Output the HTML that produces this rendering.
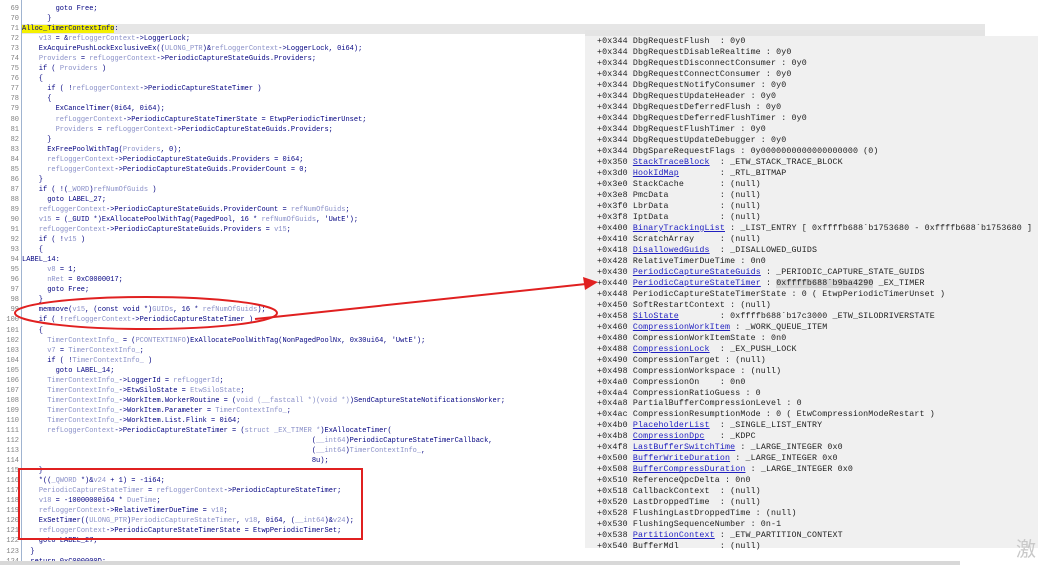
<!DOCTYPE html>
<html><head><meta charset="utf-8"><style>
body{margin:0;width:1038px;height:565px;overflow:hidden;background:#fff;position:relative;font-family:"Liberation Mono",monospace}
#ln{position:absolute;left:0;top:4px;width:19px;text-align:right;font-size:7px;line-height:10.04px;color:#808080;white-space:pre;margin:0}
#sep{position:absolute;left:21px;top:0;width:1px;height:565px;background:#a0b4d0}
#code{position:absolute;left:22px;top:4px;font-size:7px;line-height:10.04px;color:#000080;white-space:pre;margin:0}
.v{color:#8a90c8}
.hl{position:absolute;left:22px;top:24px;width:963px;height:10px;background:#e6e6e6}
.y{background:#f4f000}
#rp{position:absolute;left:585px;top:36px;width:453px;height:512px;background:#f0f0f0}
#rbar{position:absolute;left:585px;top:30px;width:400px;height:6px;background:#e4e4e4}
#rt{position:absolute;left:597px;top:37px;font-size:8.3px;letter-spacing:0.14px;line-height:10.98px;color:#202020;white-space:pre;margin:0}
#rt u{color:#2020c0}
.bot{position:absolute;left:0;top:561px;width:960px;height:4px;background:#d8d8d8}
</style></head><body>
<div class="hl"></div>
<pre id="ln">69
70
71
72
73
74
75
76
77
78
79
80
81
82
83
84
85
86
87
88
89
90
91
92
93
94
95
96
97
98
99
100
101
102
103
104
105
106
107
108
109
110
111
112
113
114
115
116
117
118
119
120
121
122
123
124</pre>
<div id="sep"></div>
<pre id="code">        goto Free;
      }
<span class="y">Alloc_TimerContextInfo</span>:
    <span class="v">v13</span> = &amp;<span class="v">refLoggerContext</span>-&gt;LoggerLock;
    ExAcquirePushLockExclusiveEx((<span class="v">ULONG_PTR</span>)&amp;<span class="v">refLoggerContext</span>-&gt;LoggerLock, 0i64);
    <span class="v">Providers</span> = <span class="v">refLoggerContext</span>-&gt;PeriodicCaptureStateGuids.Providers;
    if ( <span class="v">Providers</span> )
    {
      if ( !<span class="v">refLoggerContext</span>-&gt;PeriodicCaptureStateTimer )
      {
        ExCancelTimer(0i64, 0i64);
        <span class="v">refLoggerContext</span>-&gt;PeriodicCaptureStateTimerState = EtwpPeriodicTimerUnset;
        <span class="v">Providers</span> = <span class="v">refLoggerContext</span>-&gt;PeriodicCaptureStateGuids.Providers;
      }
      ExFreePoolWithTag(<span class="v">Providers</span>, 0);
      <span class="v">refLoggerContext</span>-&gt;PeriodicCaptureStateGuids.Providers = 0i64;
      <span class="v">refLoggerContext</span>-&gt;PeriodicCaptureStateGuids.ProviderCount = 0;
    }
    if ( !(<span class="v">_WORD</span>)<span class="v">refNumOfGuids</span> )
      goto LABEL_27;
    <span class="v">refLoggerContext</span>-&gt;PeriodicCaptureStateGuids.ProviderCount = <span class="v">refNumOfGuids</span>;
    <span class="v">v15</span> = (_GUID *)ExAllocatePoolWithTag(PagedPool, 16 * <span class="v">refNumOfGuids</span>, 'UwtE');
    <span class="v">refLoggerContext</span>-&gt;PeriodicCaptureStateGuids.Providers = <span class="v">v15</span>;
    if ( !<span class="v">v15</span> )
    {
LABEL_14:
      <span class="v">v8</span> = 1;
      <span class="v">nRet</span> = 0xC0000017;
      goto Free;
    }
    memmove(<span class="v">v15</span>, (const void *)<span class="v">GUIDs</span>, 16 * <span class="v">refNumOfGuids</span>);
    if ( !<span class="v">refLoggerContext</span>-&gt;PeriodicCaptureStateTimer )
    {
      <span class="v">TimerContextInfo_</span> = (<span class="v">PCONTEXTINFO</span>)ExAllocatePoolWithTag(NonPagedPoolNx, 0x30ui64, 'UwtE');
      <span class="v">v7</span> = <span class="v">TimerContextInfo_</span>;
      if ( !<span class="v">TimerContextInfo_</span> )
        goto LABEL_14;
      <span class="v">TimerContextInfo_</span>-&gt;LoggerId = <span class="v">refLoggerId</span>;
      <span class="v">TimerContextInfo_</span>-&gt;EtwSiloState = <span class="v">EtwSiloState</span>;
      <span class="v">TimerContextInfo_</span>-&gt;WorkItem.WorkerRoutine = (<span class="v">void (__fastcall *)(void *)</span>)SendCaptureStateNotificationsWorker;
      <span class="v">TimerContextInfo_</span>-&gt;WorkItem.Parameter = <span class="v">TimerContextInfo_</span>;
      <span class="v">TimerContextInfo_</span>-&gt;WorkItem.List.Flink = 0i64;
      <span class="v">refLoggerContext</span>-&gt;PeriodicCaptureStateTimer = (<span class="v">struct _EX_TIMER *</span>)ExAllocateTimer(
                                                                     (<span class="v">__int64</span>)PeriodicCaptureStateTimerCallback,
                                                                     (<span class="v">__int64</span>)<span class="v">TimerContextInfo_</span>,
                                                                     8u);
    }
    *((<span class="v">_QWORD</span> *)&amp;<span class="v">v24</span> + 1) = -1i64;
    <span class="v">PeriodicCaptureStateTimer</span> = <span class="v">refLoggerContext</span>-&gt;PeriodicCaptureStateTimer;
    <span class="v">v18</span> = -10000000i64 * <span class="v">DueTime</span>;
    <span class="v">refLoggerContext</span>-&gt;RelativeTimerDueTime = <span class="v">v18</span>;
    ExSetTimer((<span class="v">ULONG_PTR</span>)<span class="v">PeriodicCaptureStateTimer</span>, <span class="v">v18</span>, 0i64, (<span class="v">__int64</span>)&amp;<span class="v">v24</span>);
    <span class="v">refLoggerContext</span>-&gt;PeriodicCaptureStateTimerState = EtwpPeriodicTimerSet;
    goto LABEL_27;
  }
  return 0xC000000D;</pre>
<div class="bot"></div>
<div id="rbar"></div>
<div id="rp"></div>
<pre id="rt">+0x344 DbgRequestFlush  : 0y0
+0x344 DbgRequestDisableRealtime : 0y0
+0x344 DbgRequestDisconnectConsumer : 0y0
+0x344 DbgRequestConnectConsumer : 0y0
+0x344 DbgRequestNotifyConsumer : 0y0
+0x344 DbgRequestUpdateHeader : 0y0
+0x344 DbgRequestDeferredFlush : 0y0
+0x344 DbgRequestDeferredFlushTimer : 0y0
+0x344 DbgRequestFlushTimer : 0y0
+0x344 DbgRequestUpdateDebugger : 0y0
+0x344 DbgSpareRequestFlags : 0y0000000000000000000 (0)
+0x350 <u>StackTraceBlock</u>  : _ETW_STACK_TRACE_BLOCK
+0x3d0 <u>HookIdMap</u>        : _RTL_BITMAP
+0x3e0 StackCache       : (null)
+0x3e8 PmcData          : (null)
+0x3f0 LbrData          : (null)
+0x3f8 IptData          : (null)
+0x400 <u>BinaryTrackingList</u> : _LIST_ENTRY [ 0xffffb688`b1753680 - 0xffffb688`b1753680 ]
+0x410 ScratchArray     : (null)
+0x418 <u>DisallowedGuids</u>  : _DISALLOWED_GUIDS
+0x428 RelativeTimerDueTime : 0n0
+0x430 <u>PeriodicCaptureStateGuids</u> : _PERIODIC_CAPTURE_STATE_GUIDS
+0x440 <u>PeriodicCaptureStateTimer</u> : <span style="background:#d8d8d8">0xffffb688`b9ba4290</span> _EX_TIMER
+0x448 PeriodicCaptureStateTimerState : 0 ( EtwpPeriodicTimerUnset )
+0x450 SoftRestartContext : (null)
+0x458 <u>SiloState</u>        : 0xffffb688`b17c3000 _ETW_SILODRIVERSTATE
+0x460 <u>CompressionWorkItem</u> : _WORK_QUEUE_ITEM
+0x480 CompressionWorkItemState : 0n0
+0x488 <u>CompressionLock</u>  : _EX_PUSH_LOCK
+0x490 CompressionTarget : (null)
+0x498 CompressionWorkspace : (null)
+0x4a0 CompressionOn    : 0n0
+0x4a4 CompressionRatioGuess : 0
+0x4a8 PartialBufferCompressionLevel : 0
+0x4ac CompressionResumptionMode : 0 ( EtwCompressionModeRestart )
+0x4b0 <u>PlaceholderList</u>  : _SINGLE_LIST_ENTRY
+0x4b8 <u>CompressionDpc</u>   : _KDPC
+0x4f8 <u>LastBufferSwitchTime</u> : _LARGE_INTEGER 0x0
+0x500 <u>BufferWriteDuration</u> : _LARGE_INTEGER 0x0
+0x508 <u>BufferCompressDuration</u> : _LARGE_INTEGER 0x0
+0x510 ReferenceQpcDelta : 0n0
+0x518 CallbackContext  : (null)
+0x520 LastDroppedTime  : (null)
+0x528 FlushingLastDroppedTime : (null)
+0x530 FlushingSequenceNumber : 0n-1
+0x538 <u>PartitionContext</u> : _ETW_PARTITION_CONTEXT
+0x540 BufferMdl        : (null)</pre>
<div style="position:absolute;left:1016px;top:533px;font-size:20px;color:#c8c8c8;font-family:'Noto Sans CJK SC',sans-serif">激</div>
<svg width="1038" height="565" style="position:absolute;left:0;top:0">
<ellipse cx="146" cy="313" rx="131" ry="16" fill="none" stroke="#e02020" stroke-width="2"/>
<line x1="255" y1="319" x2="586" y2="284" stroke="#e02020" stroke-width="2"/>
<polygon points="598,282 583,277 585,290" fill="#e02020"/>
<rect x="19" y="469" width="343" height="70" fill="none" stroke="#e02020" stroke-width="2"/>
</svg>
</body></html>
